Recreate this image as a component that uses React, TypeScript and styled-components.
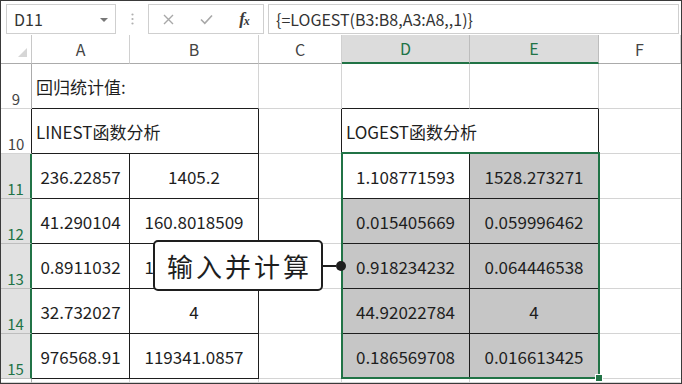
import React from 'react';
import styled, { createGlobalStyle } from 'styled-components';

const GRID = '#d4d4d4';
const DARK = '#1e1e1e';
const GREEN = '#217346';
const FILL = '#c6c6c6';
const SEL_HEAD = '#dcdcdc';

const GlobalStyle = createGlobalStyle`
  html, body { margin: 0; padding: 0; background: #fff; }
  body { font-family: "Noto Sans CJK SC", "Noto Sans", sans-serif; }
`;

const Frame = styled.div`
  position: relative;
  width: 682px;
  height: 384px;
  box-sizing: border-box;
  border: 1px solid #3a3a3a;
  overflow: hidden;
  display: flex;
  flex-direction: column;
  background: #fff;
`;

const FormulaBar = styled.div`
  display: flex;
  align-items: flex-start;
  height: 34px;
  flex-shrink: 0;
  box-sizing: border-box;
  padding: 3px 2px 0 5px;
`;

const NameBox = styled.div`
  box-sizing: border-box;
  width: 110px;
  height: 30px;
  border: 1px solid #cfcfcf;
  display: flex;
  align-items: center;
  justify-content: space-between;
  padding: 0 7px 0 7px;
  font-size: 16px;
  color: #333;
`;

const DropArrow = styled.span`
  width: 0;
  height: 0;
  border-left: 4px solid transparent;
  border-right: 4px solid transparent;
  border-top: 4px solid #777;
  margin-top: 2px;
`;

const Grip = styled.div`
  width: 32px;
  height: 30px;
  display: flex;
  align-items: center;
  justify-content: center;
`;

const ButtonGroup = styled.div`
  box-sizing: border-box;
  height: 30px;
  border: 1px solid #cfcfcf;
  display: flex;
`;

const IconSlot = styled.div`
  width: 38px;
  height: 28px;
  display: flex;
  align-items: center;
  justify-content: center;
`;

const Fx = styled.span`
  font-family: "Liberation Serif", "DejaVu Serif", serif;
  font-style: italic;
  font-weight: bold;
  font-size: 17px;
  color: #3a3a3a;
  letter-spacing: -1px;
  & > small {
    font-size: 12px;
    position: relative;
    top: 1px;
  }
`;

const FormulaInput = styled.div`
  flex: 1;
  box-sizing: border-box;
  height: 30px;
  margin-left: 4px;
  border: 1px solid #cfcfcf;
  display: flex;
  align-items: center;
  padding-left: 7px;
  font-size: 16px;
  color: #333;
`;

const Sheet = styled.div`
  position: relative;
  flex: 1;
  display: grid;
  grid-template-columns: 31px 98px 129px 83px 128px 129px 1fr;
  grid-template-rows: 29px repeat(7, 45px) 1fr;
`;

const Corner = styled.div`
  box-sizing: border-box;
  border-right: 1px solid #c8c8c8;
  border-bottom: 1px solid #ababab;
  display: flex;
  align-items: flex-end;
  justify-content: flex-end;
  padding: 0 4px 6px 0;
`;

const ColHead = styled.div<{ $sel?: boolean }>`
  box-sizing: border-box;
  display: flex;
  align-items: flex-end;
  justify-content: center;
  padding-bottom: 2px;
  font-size: 16px;
  color: ${p => (p.$sel ? GREEN : '#444')};
  background: ${p => (p.$sel ? SEL_HEAD : '#fff')};
  border-right: 1px solid ${p => (p.$sel ? '#bdbdbd' : '#d0d0d0')};
  border-bottom: ${p => (p.$sel ? `2px solid ${GREEN}` : '1px solid #ababab')};
`;

const RowHead = styled.div<{ $sel?: boolean; $edge?: string }>`
  box-sizing: border-box;
  display: flex;
  align-items: flex-end;
  justify-content: center;
  font-size: 15px;
  line-height: 18px;
  color: ${p => (p.$sel ? GREEN : '#444')};
  background: ${p => (p.$sel ? '#e1e1e1' : '#fff')};
  border-right: ${p => (p.$sel ? `2px solid ${GREEN}` : `1px solid ${p.$edge ?? '#ababab'}`)};
  border-bottom: 1px solid ${p => (p.$sel ? '#bdbdbd' : GRID)};
`;

const Cell = styled.div<{ $rb?: string; $bb?: string; $bg?: string; $left?: boolean; $span?: number }>`
  box-sizing: border-box;
  display: flex;
  align-items: center;
  justify-content: ${p => (p.$left ? 'flex-start' : 'center')};
  padding-left: ${p => (p.$left ? '4px' : '0')};
  grid-column: ${p => (p.$span ? `span ${p.$span}` : 'auto')};
  border-right: 1px solid ${p => p.$rb ?? GRID};
  border-bottom: 1px solid ${p => p.$bb ?? GRID};
  background: ${p => p.$bg ?? '#fff'};
  font-size: 17px;
  color: ${DARK};
  white-space: nowrap;
  overflow: hidden;
`;

const Selection = styled.div`
  position: absolute;
  left: 340px;
  top: 117px;
  width: 259px;
  height: 227px;
  box-sizing: border-box;
  border: 2px solid ${GREEN};
  pointer-events: none;
`;

const FillHandle = styled.span`
  position: absolute;
  right: -5px;
  bottom: -5px;
  width: 6px;
  height: 6px;
  background: ${GREEN};
  border: 1px solid #fff;
`;

const Callout = styled.div`
  position: absolute;
  left: 152px;
  top: 205px;
  display: flex;
  align-items: center;
`;

const CalloutBox = styled.div`
  box-sizing: border-box;
  width: 170px;
  height: 51px;
  border: 2px solid ${DARK};
  border-radius: 5px;
  background: #fff;
  display: flex;
  align-items: center;
  justify-content: center;
  font-size: 26px;
  letter-spacing: 3px;
  padding-left: 3px;
  color: ${DARK};
`;

const Leader = styled.span`
  width: 13px;
  height: 2px;
  background: ${DARK};
`;

const Dot = styled.span`
  width: 10px;
  height: 10px;
  border-radius: 50%;
  background: ${DARK};
`;

type CellSpec = { text?: string; rb?: string; bb?: string; bg?: string; left?: boolean; span?: number };
type RowSpec = { num: number; sel?: boolean; edge?: string; cells: CellSpec[] };

const data: string[][] = [
  ['236.22857', '1405.2', '1.108771593', '1528.273271'],
  ['41.290104', '160.8018509', '0.015405669', '0.059996462'],
  ['0.8911032', '180.5123391', '0.918234232', '0.064446538'],
  ['32.732027', '4', '44.92022784', '4'],
  ['976568.91', '119341.0857', '0.186569708', '0.016613425'],
];

const rows: RowSpec[] = [
  {
    num: 9,
    cells: [
      { text: '回归统计值:', left: true, span: 2, bb: DARK },
      {},
      { bb: DARK },
      { bb: DARK },
      { rb: 'transparent' },
    ],
  },
  {
    num: 10,
    edge: DARK,
    cells: [
      { text: 'LINEST函数分析', left: true, span: 2, rb: DARK, bb: DARK },
      { rb: DARK },
      { text: 'LOGEST函数分析', left: true, span: 2, rb: DARK, bb: DARK },
      { rb: 'transparent' },
    ],
  },
  ...data.map((r, i) => ({
    num: 11 + i,
    sel: true,
    cells: [
      { text: r[0], rb: DARK, bb: DARK },
      { text: r[1], rb: DARK, bb: DARK },
      { rb: DARK },
      { text: r[2], rb: DARK, bb: DARK, bg: i === 0 ? '#fff' : FILL },
      { text: r[3], rb: DARK, bb: DARK, bg: FILL },
      { rb: 'transparent' },
    ],
  })),
];

const columns = ['A', 'B', 'C', 'D', 'E', 'F'];

export default function App() {
  return (
    <>
      <GlobalStyle />
      <Frame>
        <FormulaBar>
          <NameBox>
            D11
            <DropArrow />
          </NameBox>
          <Grip>
            <svg width="3" height="12" viewBox="0 0 3 12">
              <circle cx="1.5" cy="1.5" r="1.1" fill="#b0b0b0" />
              <circle cx="1.5" cy="6" r="1.1" fill="#b0b0b0" />
              <circle cx="1.5" cy="10.5" r="1.1" fill="#b0b0b0" />
            </svg>
          </Grip>
          <ButtonGroup>
            <IconSlot>
              <svg width="11" height="11" viewBox="0 0 11 11">
                <path d="M1 1 L10 10 M10 1 L1 10" stroke="#a8a8a8" strokeWidth="1.4" fill="none" />
              </svg>
            </IconSlot>
            <IconSlot>
              <svg width="13" height="11" viewBox="0 0 13 11">
                <path d="M1 5.5 L4.8 9.3 L12 1.5" stroke="#a8a8a8" strokeWidth="1.6" fill="none" />
              </svg>
            </IconSlot>
            <IconSlot>
              <Fx>
                f<small>x</small>
              </Fx>
            </IconSlot>
          </ButtonGroup>
          <FormulaInput>{'{=LOGEST(B3:B8,A3:A8,,1)}'}</FormulaInput>
        </FormulaBar>

        <Sheet>
          <Corner>
            <svg width="9" height="9" viewBox="0 0 9 9">
              <polygon points="9,0 9,9 0,9" fill="#d6d6d6" />
            </svg>
          </Corner>
          {columns.map(c => (
            <ColHead key={c} $sel={c === 'D' || c === 'E'}>
              {c}
            </ColHead>
          ))}

          {rows.map(row => (
            <React.Fragment key={row.num}>
              <RowHead $sel={row.sel} $edge={row.edge}>
                {row.num}
              </RowHead>
              {row.cells.map((c, i) => (
                <Cell key={i} $rb={c.rb} $bb={c.bb} $bg={c.bg} $left={c.left} $span={c.span}>
                  {c.text}
                </Cell>
              ))}
            </React.Fragment>
          ))}

          <RowHead />
          {columns.map(c => (
            <Cell key={c} $rb={c === 'F' ? 'transparent' : GRID} />
          ))}

          <Selection>
            <FillHandle />
          </Selection>

          <Callout>
            <CalloutBox>输入并计算</CalloutBox>
            <Leader />
            <Dot />
          </Callout>
        </Sheet>
      </Frame>
    </>
  );
}
